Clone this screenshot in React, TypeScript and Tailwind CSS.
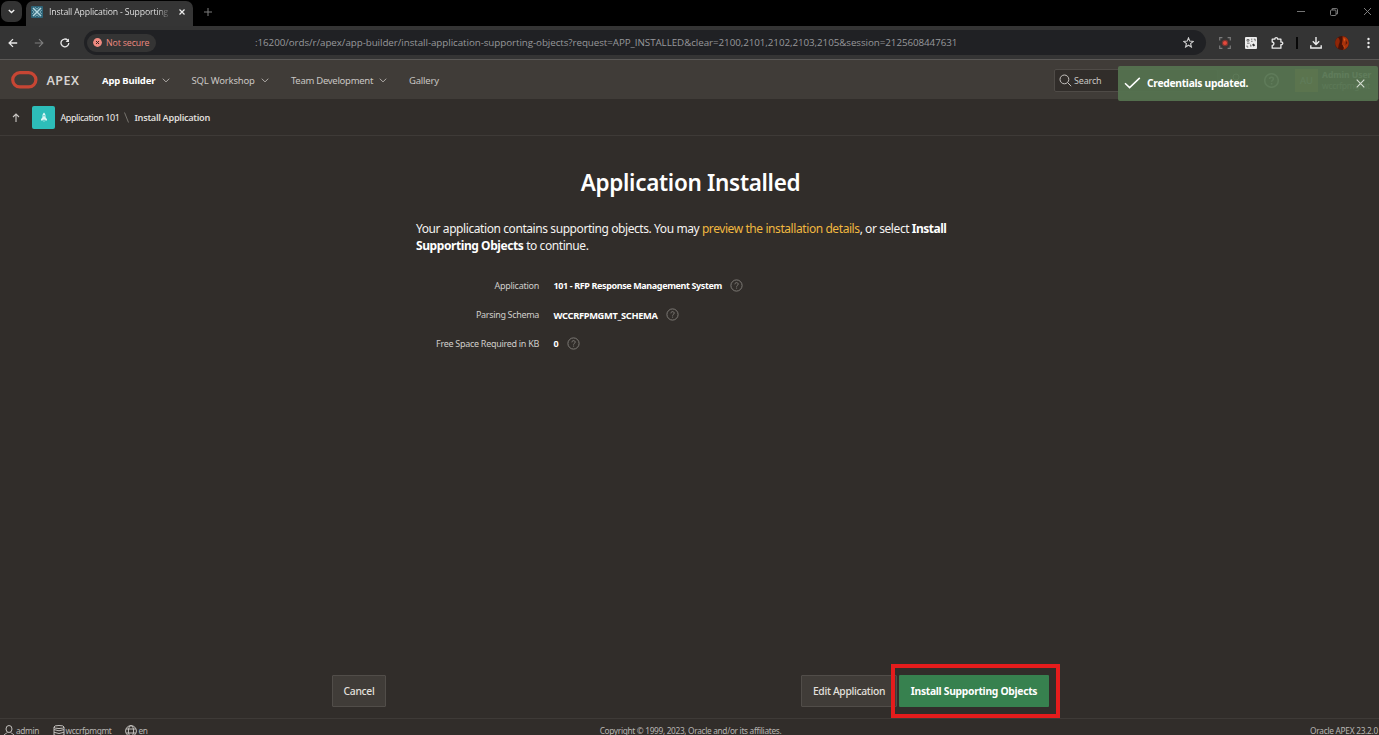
import type { ReactNode } from "react";

function Chevron() {
  return (
    <svg className="block h-[5px] w-[8px]" viewBox="0 0 8 5" fill="none" stroke="#b3afab" strokeWidth="1">
      <path d="M0.8 0.7 4 3.9 7.2 0.7" />
    </svg>
  );
}

function HelpIcon() {
  return (
    <svg className="block size-[13px]" viewBox="0 0 13 13" fill="none" stroke="#85817d" strokeWidth="0.9">
      <circle cx="6.5" cy="6.5" r="5.6" />
      <path d="M4.9 5.3c0-2.2 3.3-2.2 3.3-.1 0 1.2-1.6 1.1-1.6 2.4M6.6 8.6v1" />
    </svg>
  );
}

function BrowserTabs() {
  return (
    <div className="flex h-[26px] bg-black font-['Open_Sans',sans-serif]">
      <div className="mt-px ml-px flex h-[21px] w-[21px] items-center justify-center rounded-[7px] bg-[#333333]">
        <svg className="h-[5px] w-[7px]" viewBox="0 0 7 5" fill="none" stroke="#f0f0f0" strokeWidth="1.4">
          <path d="M0.8 0.9 3.5 3.6 6.2 0.9" />
        </svg>
      </div>
      <div className="mt-px ml-[4px] flex h-[25px] w-[167px] items-center rounded-t-[7px] bg-[#353535] pb-[3px]">
        <svg className="ml-[5px] block size-[12px] shrink-0" viewBox="0 0 12 12">
          <rect width="12" height="12" rx="1" fill="#2d6377" />
          <path d="M2 2 10 10M10 2 2 10" stroke="#b4d8e0" strokeWidth="1.5" />
          <path d="M4 1.2 6 3.2 8 1.2M4 10.8 6 8.8 8 10.8M1.2 4 3.2 6 1.2 8M10.8 4 8.8 6l2 2" fill="none" stroke="#8fc0cb" strokeWidth=".9" />
        </svg>
        <span className="ml-[6px] w-[120px] shrink-0 overflow-hidden bg-linear-to-r from-[#eeeeee] from-90% to-[#555555] bg-clip-text text-[8.7px] leading-[14px] tracking-[-0.15px] whitespace-nowrap text-transparent">
          Install Application - Supporting
        </span>
        <svg className="ml-[10px] block size-[6px] shrink-0" viewBox="0 0 6 6" stroke="#ededed" strokeWidth="1.2">
          <path d="M.5.5 5.5 5.5M5.5.5.5 5.5" />
        </svg>
      </div>
      <svg className="mt-[7.5px] ml-[11px] size-[8px]" viewBox="0 0 8 8" stroke="#7d7d7d" strokeWidth="1">
        <path d="M4 0V8M0 4H8" />
      </svg>
      <div className="ml-auto flex h-[23px] items-center pr-[8px]">
        <svg className="h-[7px] w-[8px]" viewBox="0 0 8 7" stroke="#747474" strokeWidth="1"><path d="M0 3.5H8" /></svg>
        <svg className="ml-[25px] size-[8px]" viewBox="0 0 8 8" fill="none" stroke="#8a8a8a" strokeWidth=".9">
          <rect x=".5" y="2" width="5.5" height="5.5" rx="1" />
          <path d="M2.2 2V.6H6.6Q7.5.6 7.5 1.5V5.8H6" />
        </svg>
        <svg className="ml-[26px] size-[7px]" viewBox="0 0 7 7" stroke="#8a8a8a" strokeWidth=".9"><path d="M0 0 7 7M7 0 0 7" /></svg>
      </div>
    </div>
  );
}

function BrowserToolbar() {
  return (
    <div className="flex h-[34px] items-center border-b border-[#5b5957] bg-[#343434] font-['Open_Sans',sans-serif]">
      <svg className="ml-[8px] size-[10px]" viewBox="0 0 10 10" fill="none" stroke="#e8e8e8" strokeWidth="1.3">
        <path d="M9.2 5H1.2M5 1.1 1.1 5 5 8.9" />
      </svg>
      <svg className="ml-[16px] size-[10px]" viewBox="0 0 10 10" fill="none" stroke="#7e7e7e" strokeWidth="1.1">
        <path d="M.8 5H8.8M5 1.1 8.9 5 5 8.9" />
      </svg>
      <svg className="ml-[16px] size-[10px]" viewBox="0 0 10 10" fill="none" stroke="#e8e8e8" strokeWidth="1.3">
        <path d="M8.8 5A3.9 3.9 0 1 1 7.7 2.2L8.6 3.2" />
        <path d="M9 .4V4H5.6z" fill="#e8e8e8" stroke="none" />
      </svg>
      <div className="ml-[14px] flex h-[25px] w-[1122px] items-center rounded-full bg-[#202124]">
        <div className="ml-[3px] flex h-[18px] w-[69px] items-center rounded-full bg-[#343434]">
          <svg className="ml-[6px] size-[9px] shrink-0" viewBox="0 0 9 9">
            <circle cx="4.5" cy="4.5" r="4.4" fill="#ef8a80" />
            <path d="M3 3 6 6M6 3 3 6" stroke="#3a2524" strokeWidth="1" />
          </svg>
          <span className="mt-px ml-[4px] text-[8.8px] font-medium tracking-[-0.14px] whitespace-nowrap text-[#ee8a80]">Not secure</span>
        </div>
        <span className="ml-[99px] text-[9.8px] leading-[14px] tracking-[-0.062px] whitespace-nowrap text-[#97989b]">
          :16200/ords/r/apex/app-builder/install-application-supporting-objects?request=APP_INSTALLED&amp;clear=2100,2101,2102,2103,2105&amp;session=2125608447631
        </span>
        <svg className="mr-[12px] ml-auto size-[11px]" viewBox="0 0 11 11" fill="none" stroke="#cfcfcf" strokeWidth="1.1">
          <path d="M5.5.9 6.8 4.1 10.2 4.4 7.6 6.6 8.4 10 5.5 8.2 2.6 10 3.4 6.6.8 4.4 4.2 4.1z" />
        </svg>
      </div>
      <svg className="ml-[13px] size-[12px]" viewBox="0 0 12 12" fill="none" stroke="#7b7b7b" strokeWidth="1.2">
        <path d="M.7 3.4V.7H3.4M8.6.7H11.3V3.4M11.3 8.6V11.3H8.6M3.4 11.3H.7V8.6" />
        <circle cx="6" cy="6" r="2.6" fill="#e5493c" stroke="#7c3530" />
      </svg>
      <svg className="ml-[14px] size-[12px]" viewBox="0 0 12 12">
        <rect width="12" height="12" rx="1" fill="#ececec" />
        <path d="M2 2.5h2v1.6H2zM6 2.2h1.3M8.8 2.2h1.4v2M6 4.3h1.6M2 6.2h2.6M2 8.5v1.5h1.3M5 8h.9v1.8" fill="none" stroke="#555555" strokeWidth=".8" />
        <path d="M7 7.8 8.6 6.6 10.2 8.2 8.6 9.6z" fill="#343434" />
      </svg>
      <svg className="ml-[14px] h-[12px] w-[13px]" viewBox="0 0 13 12" fill="none" stroke="#ececec" strokeWidth="1.3">
        <path d="M1.2 2.2H3.9C3.6.2 6.9.2 6.6 2.2H9.9V5C12.4 4.7 12.4 8 9.9 7.7V11.2H1.2V8.4C3.5 8.4 3.5 5 1.2 5z" strokeLinejoin="round" />
      </svg>
      <div className="ml-[12px] h-[12px] w-[2px] bg-[#080808]" />
      <svg className="ml-[12px] size-[12px]" viewBox="0 0 12 12" fill="none" stroke="#ececec" strokeWidth="1.4">
        <path d="M6 0V7M2.8 4.3 6 7.5 9.2 4.3M.8 8.3V11H11.2V8.3" />
      </svg>
      <svg className="ml-[13px] size-[14px]" viewBox="0 0 14 14">
        <circle cx="7" cy="7" r="7" fill="#4a1206" />
        <path d="M3 1.4C5 3 5.4 6 3.8 8.4L3 12.5C-.6 10-1 4 3 1.4z" fill="#8e2608" />
        <path d="M7.5.2C12 .6 14 4 13.8 7.5 13.4 11 11 13.5 8 13.8L9.5 11 6.8 8.5 7.6 4z" fill="#a9330c" />
        <path d="M8.5 2 10.5 3 9 6zM8 9l2 2-1 1z" fill="#df5814" />
        <path d="M11 4.5 12.5 7 10.5 9z" fill="#5d1a08" />
      </svg>
      <svg className="ml-[18px] h-[12px] w-[3px]" viewBox="0 0 3 12" fill="#ececec">
        <circle cx="1.5" cy="2" r="1.2" /><circle cx="1.5" cy="6" r="1.2" /><circle cx="1.5" cy="10" r="1.2" />
      </svg>
    </div>
  );
}

function Header() {
  return (
    <header className="relative flex h-[39px] items-center bg-[#403c38] text-[9.5px] text-[#c9c6c3]">
      <svg className="mt-px ml-[11px] h-[18px] w-[27px]" viewBox="0 0 27 18" fill="none">
        <rect x="1.7" y="1.7" width="23.2" height="14.2" rx="7.1" stroke="#c74634" strokeWidth="3.2" />
      </svg>
      <span className="mt-[2px] ml-[8.5px] w-[34px] text-[12.5px] font-semibold tracking-[0.45px] text-[#d5d2cf]">APEX</span>
      <div className="mt-[3px] ml-[21.5px] flex w-[89.5px] items-center gap-[7px]">
        <span className="font-bold tracking-[-0.17px] whitespace-nowrap text-white">App Builder</span>
        <Chevron />
      </div>
      <div className="mt-[3px] flex w-[99.5px] items-center gap-[6px]">
        <span className="tracking-[-0.19px] whitespace-nowrap">SQL Workshop</span>
        <Chevron />
      </div>
      <div className="mt-[3px] flex w-[118px] items-center gap-[6px]">
        <span className="tracking-[-0.28px] whitespace-nowrap">Team Development</span>
        <Chevron />
      </div>
      <span className="mt-[3px] tracking-[-0.2px]">Gallery</span>

      <div className="mt-[2px] ml-auto flex h-[23px] w-[164px] items-center rounded-[2px] border border-[#4f4b47] bg-[#312d2a]">
        <svg className="ml-[4px] size-[13px]" viewBox="0 0 13 13" fill="none" stroke="#c5c2bf" strokeWidth="1">
          <circle cx="5.4" cy="5.4" r="4.4" /><path d="M8.6 8.6 12.2 12.2" />
        </svg>
        <span className="mt-px ml-[2px] text-[9px] tracking-[-0.17px]">Search</span>
      </div>
      <svg className="ml-[11px] size-[14px]" viewBox="0 0 14 14" fill="none" stroke="#c5c2bf"><circle cx="7" cy="4" r="3" /><path d="M2 13Q2 8 7 8T12 13" /></svg>
      <svg className="mt-[2px] ml-[21px] size-[15px]" viewBox="0 0 15 15" fill="none" stroke="#f5f2ef" strokeWidth="1.5">
        <circle cx="7.5" cy="7.5" r="6.8" /><path d="M5.6 6c0-2.4 3.8-2.4 3.8-.1 0 1.4-1.8 1.3-1.8 2.8M7.6 10v1.4" />
      </svg>
      <div className="mt-[2px] ml-[16px] flex h-[23px] w-[23px] items-center justify-center bg-[#b68c32] text-[9.5px] text-white">AU</div>
      <div className="mr-[5px] ml-[4px] w-[52px] text-[8.5px] leading-[11px]">
        <div className="font-bold whitespace-nowrap text-white">Admin User</div>
        <div className="tracking-[-0.3px]">wccrfpmgmt</div>
      </div>

      <div className="absolute top-[6px] right-px flex h-[35px] w-[260px] items-center rounded-[2px] bg-[#557350]/94">
        <svg className="mb-px ml-[6px] h-[12px] w-[17px]" viewBox="0 0 17 12" fill="none" stroke="#ffffff" strokeWidth="1.5">
          <path d="M1 6.3 5.6 10.6 15.8.9" />
        </svg>
        <span className="ml-[6px] text-[10.3px] font-bold tracking-[-0.3px] whitespace-nowrap text-white">Credentials updated.</span>
        <svg className="mr-[13px] mb-px ml-auto size-[9px]" viewBox="0 0 9 9" stroke="#d5ddd2" strokeWidth="1.1">
          <path d="M.7.7 8.3 8.3M8.3.7.7 8.3" />
        </svg>
      </div>
    </header>
  );
}

function Breadcrumb() {
  return (
    <nav className="flex h-[37px] shrink-0 items-center border-b border-[#3e3a37] text-[9px]">
      <svg className="ml-[12px] h-[9px] w-[8px]" viewBox="0 0 8 9" fill="none" stroke="#cbc8c5" strokeWidth="1.1">
        <path d="M4 9V1M1 4 4 1 7 4" />
      </svg>
      <div className="ml-[12px] flex size-[23px] items-center justify-center rounded-[2px] bg-[#2dbdb9]">
        <svg className="h-[10px] w-[8px]" viewBox="0 0 8 10" fill="#ffffff">
          <path d="M4 .5C5.3 1.6 5.7 3.2 5.5 5.2L7 7.2V8.6H5.2V7.8H2.8V8.6H1V7.2L2.5 5.2C2.3 3.2 2.7 1.6 4 .5z" opacity=".85" />
          <path d="M3.4 8.4H4.6V9.6H3.4z" opacity=".8" /><circle cx="4" cy="3.7" r=".7" fill="#2dbdb9" />
        </svg>
      </div>
      <span className="mt-[2px] ml-[5.5px] w-[60px] tracking-[-0.41px] whitespace-nowrap text-[#f1efed]">Application 101</span>
      <svg className="ml-[3.5px] h-[11px] w-[5px]" viewBox="0 0 5 11" stroke="#77736f"><path d="M.5.5 4.5 10.5" /></svg>
      <span className="mt-[2px] ml-[5.5px] text-[9.2px] font-semibold tracking-[-0.3px] whitespace-nowrap text-[#dedbd8]">Install Application</span>
    </nav>
  );
}

function Field({ label, children }: { label: ReactNode; children: ReactNode }) {
  return (
    <div className="flex h-[29px] items-center">
      <div className="mt-px w-[123px] text-right text-[9px] whitespace-nowrap text-[#d0cdca]">{label}</div>
      <div className="mt-px ml-[14.5px] text-[9px] font-bold whitespace-nowrap text-white">{children}</div>
      <div className="mb-px ml-[8px]"><HelpIcon /></div>
    </div>
  );
}

function Footer() {
  return (
    <footer className="grid h-[17px] grid-cols-3 items-start overflow-hidden border-t border-[#3e3a37] pt-[6px] text-[8.3px] leading-[12px] text-[#b9b6b3]">
      <div className="flex pl-[3px]">
        <svg className="block size-[12px]" viewBox="0 0 12 12" fill="none" stroke="#c3c0bd" strokeWidth="1">
          <ellipse cx="6" cy="4" rx="3" ry="3.5" /><path d="M4.3 7.4C3.8 8.8.8 8.6.5 11.5M7.7 7.4C8.2 8.8 11.2 8.6 11.5 11.5" />
        </svg>
        <span className="ml-[1px] w-[24px] tracking-[-0.36px]">admin</span>
        <svg className="ml-[12.5px] block size-[12px]" viewBox="0 0 12 12" fill="none" stroke="#c3c0bd" strokeWidth="1">
          <ellipse cx="6" cy="2" rx="5" ry="1.5" /><path d="M1 2V10.5M11 2V10.5M1 4.6Q6 7 11 4.6M1 7.3Q6 9.7 11 7.3M1 10Q6 12.4 11 10" />
        </svg>
        <span className="ml-[1px] w-[47px] tracking-[-0.35px]">wccrfpmgmt</span>
        <svg className="ml-[12px] block size-[12px]" viewBox="0 0 12 12" fill="none" stroke="#c3c0bd" strokeWidth="1">
          <circle cx="6" cy="6" r="5.4" /><ellipse cx="6" cy="6" rx="2.6" ry="5.4" /><path d="M1.2 4H10.8M1.2 8H10.8" />
        </svg>
        <span className="ml-[2px] tracking-[-0.35px]">en</span>
      </div>
      <div className="pl-[2px] text-center tracking-[-0.32px]">Copyright © 1999, 2023, Oracle and/or its affiliates.</div>
      <div className="pr-px text-right tracking-[-0.27px]">Oracle APEX 23.2.0</div>
    </footer>
  );
}

export default function App() {
  return (
    <div className="flex h-[735px] w-[1379px] flex-col overflow-hidden bg-[#312d2a] font-['Noto_Sans',sans-serif] leading-[1.4]">
      <BrowserTabs />
      <BrowserToolbar />
      <Header />
      <Breadcrumb />
      <main className="flex flex-1 flex-col">
        <h1 className="mt-[31px] pl-[2px] text-center text-[22.5px] leading-[32px] font-semibold tracking-[-0.31px] text-white">Application Installed</h1>
        <p className="mt-[21px] ml-[416px] text-[12px] leading-[17px] tracking-[-0.42px] whitespace-nowrap text-[#f5f3f1]">
          Your application contains supporting objects. You may{" "}
          <a className="text-[#f0b840]">preview the installation details</a>, or select{" "}
          <strong className="font-bold tracking-[-0.5px] text-white">Install</strong>
          <br />
          <strong className="font-bold text-white">Supporting Objects</strong> to continue.
        </p>
        <div className="mt-[17.5px] ml-[416px] flex flex-col">
          <Field label={<span className="tracking-[-0.26px]">Application</span>}><span className="tracking-[-0.38px]">101 - RFP Response Management System</span></Field>
          <Field label={<span className="tracking-[-0.33px]">Parsing Schema</span>}><span className="text-[9.3px] tracking-[-0.33px]">WCCRFPMGMT_SCHEMA</span></Field>
          <Field label={<span className="tracking-[-0.29px]">Free Space Required in KB</span>}>0</Field>
        </div>
        <div className="mt-auto flex h-[55px] items-center pl-[332px] text-[10.3px] text-[#e3e0dd]">
          <button className="h-[32px] w-[54px] rounded-[1px] border border-[#514d49] bg-[#403c38] pt-px font-medium tracking-[-0.28px]">Cancel</button>
          <button className="ml-[415px] h-[32px] w-[96px] rounded-[1px] border border-[#514d49] bg-[#403c38] pt-px font-medium tracking-[-0.3px]">Edit Application</button>
          <div className="relative ml-[2px]">
            <button className="block h-[32px] w-[150px] rounded-[1px] bg-[#37814f] pt-px font-bold tracking-[-0.29px] text-white">Install Supporting Objects</button>
            <div className="absolute top-[-11px] left-[-8px] h-[54px] w-[169px] border-4 border-[#e51c1c]" />
          </div>
        </div>
      </main>
      <Footer />
    </div>
  );
}
